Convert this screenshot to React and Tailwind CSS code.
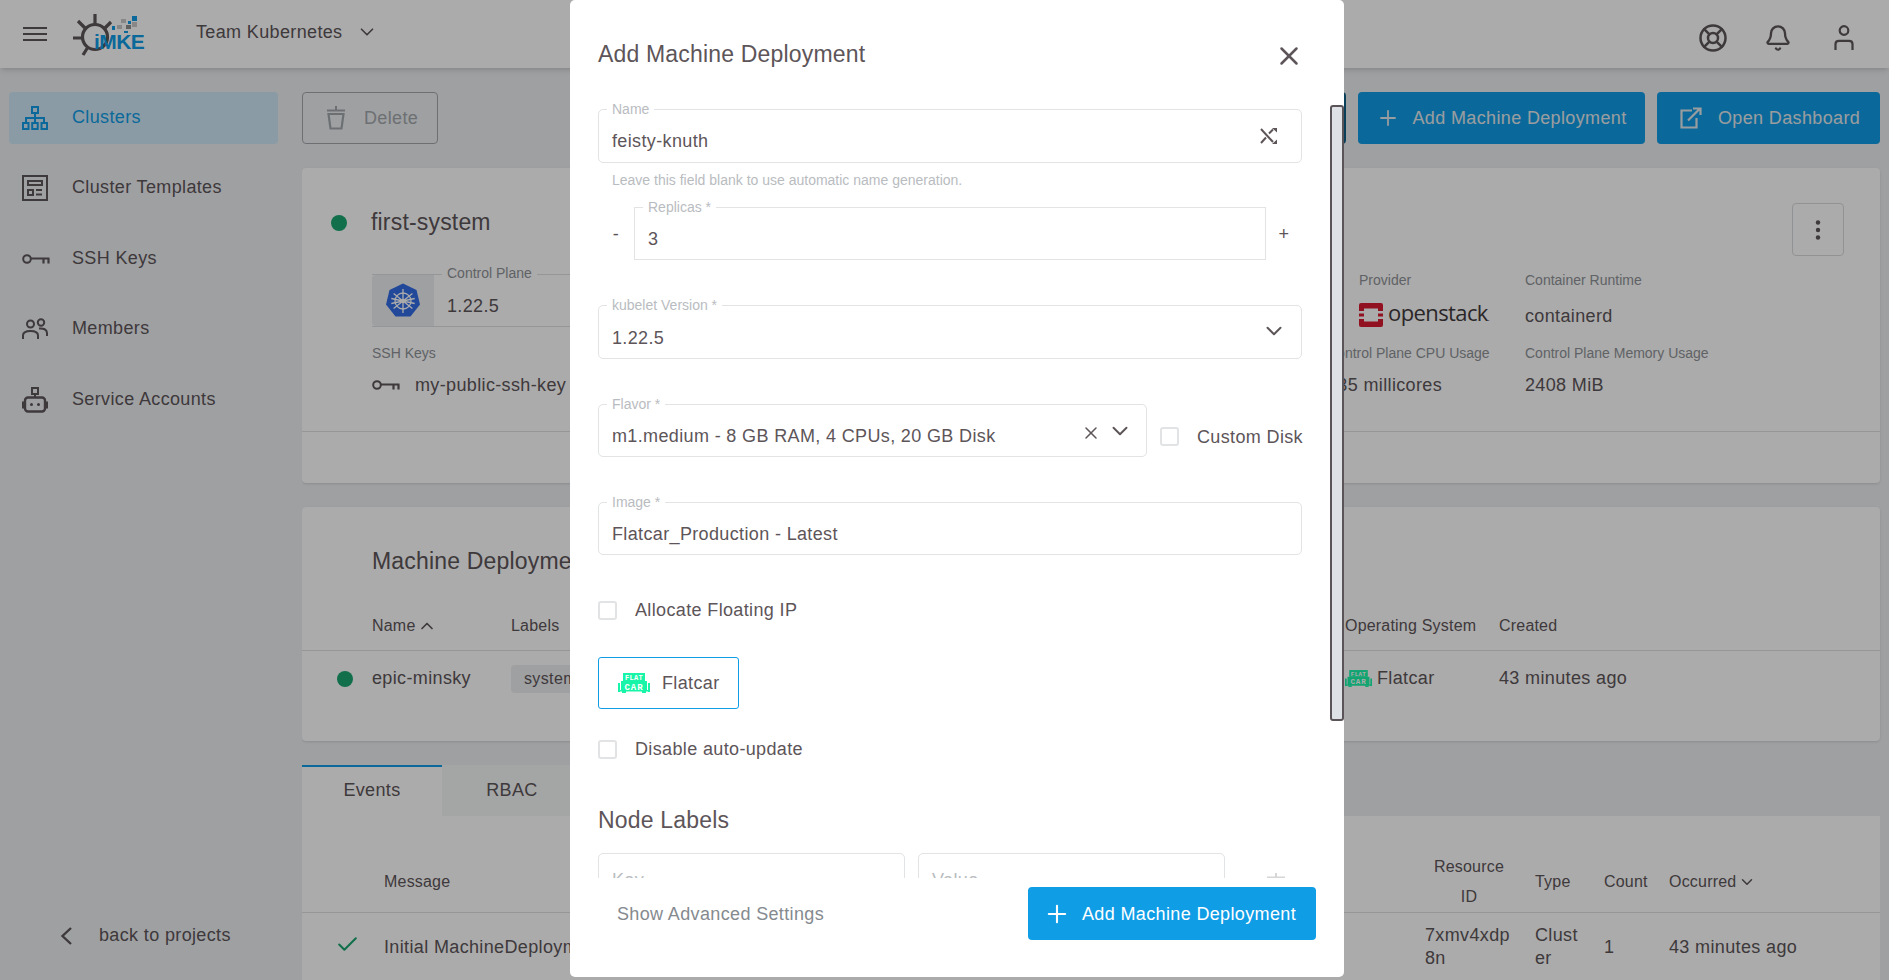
import React from "react";
import { Bell, LifeBuoy, X, ChevronDown, ChevronUp, Plus, Check } from "lucide-react";

const Dot = ({ className = "" }) => (
  <span className={`block w-4 h-4 rounded-full bg-[#1ba672] ${className}`} />
);

const HamburgerIcon = () => (
  <svg width="24" height="16" viewBox="0 0 24 16" fill="none" stroke="currentColor" strokeWidth="2.200">
    <path d="M0 2h24M0 8h24M0 14h24" />
  </svg>
);

const ClustersIcon = () => (
  <svg width="26" height="24" viewBox="0 0 26 24" fill="none" stroke="currentColor" strokeWidth="2">
    <rect x="10" y="1" width="6" height="6" />
    <path d="M13 7v5M4 17v-5h18v5M13 12v5" />
    <rect x="1" y="17" width="5.500" height="6" />
    <rect x="10.200" y="17" width="5.500" height="6" />
    <rect x="19.500" y="17" width="5.500" height="6" />
  </svg>
);

const TemplatesIcon = () => (
  <svg width="26" height="26" viewBox="0 0 26 26" fill="none" stroke="currentColor" strokeWidth="2">
    <rect x="1" y="1" width="24" height="24" />
    <rect x="6" y="6" width="14" height="4" />
    <rect x="6" y="15" width="5" height="5" />
    <path d="M14 15h6M14 19.500h6" />
  </svg>
);

const KeyIcon = ({ className = "" }) => (
  <svg className={className} width="28" height="12" viewBox="0 0 28 12" fill="none" stroke="currentColor" strokeWidth="2">
    <circle cx="5" cy="6" r="3.800" />
    <path d="M9 5.500h18.500M21.500 5.500v5M26.500 5.500v5" strokeWidth="2.200" />
  </svg>
);

const MembersIcon = () => (
  <svg width="26" height="22" viewBox="0 0 26 22" fill="none" stroke="currentColor" strokeWidth="2">
    <circle cx="8.500" cy="6" r="3.500" />
    <circle cx="19" cy="4.500" r="3.200" />
    <path d="M1 21v-3.500c0-3 3-4.500 7.500-4.500s7.500 1.500 7.500 4.500V21" />
    <path d="M17 10.500c4.500-.500 8 1 8 4.500v3" />
  </svg>
);

const RobotIcon = () => (
  <svg width="26" height="26" viewBox="0 0 26 26" fill="none">
    <rect x="10" y="1" width="6" height="6" stroke="currentColor" strokeWidth="2" />
    <path d="M13 7v4" stroke="currentColor" strokeWidth="2" />
    <rect x="3" y="10.500" width="20" height="14" rx="3" stroke="currentColor" strokeWidth="2.400" />
    <path d="M1 14.500v7M25 14.500v7" stroke="currentColor" strokeWidth="2.400" />
    <circle cx="9.500" cy="17.500" r="1.500" fill="currentColor" />
    <circle cx="16.500" cy="17.500" r="1.500" fill="currentColor" />
  </svg>
);

const BucketIcon = ({ className = "" }) => (
  <svg className={className} width="20" height="24" viewBox="0 0 20 24" fill="none" stroke="currentColor" strokeWidth="2">
    <path d="M10 0v4M1 4.500h18" />
    <path d="M2.500 8h15l-2 14.500h-11z" strokeWidth="2.200" />
  </svg>
);

const UserIcon = () => (
  <svg width="20" height="26" viewBox="0 0 20 26" fill="none" stroke="currentColor" strokeWidth="2.200">
    <circle cx="10" cy="5.500" r="4.300" />
    <path d="M1.500 25v-6c0-2 1.500-3.200 3.500-3.200h10c2 0 3.500 1.200 3.500 3.200v6" />
  </svg>
);

const ExternalIcon = () => (
  <svg width="22" height="22" viewBox="0 0 22 22" fill="none" stroke="currentColor" strokeWidth="2.200">
    <path d="M12 3.500H1.500v17h15V11" />
    <path d="M8 13.500 20 1.500M13 1.500h7.500V8" />
  </svg>
);

const MoreIcon = () => (
  <svg width="6" height="20" viewBox="0 0 6 20" fill="currentColor">
    <circle cx="3" cy="2.500" r="2.200" />
    <circle cx="3" cy="10" r="2.200" />
    <circle cx="3" cy="17.500" r="2.200" />
  </svg>
);

const ShuffleIcon = ({ className = "" }) => (
  <svg className={className} width="18" height="16" viewBox="0 0 18 16" fill="none" stroke="currentColor" strokeWidth="2">
    <path d="M1 1l12 13M1 15l5-5.500M9 5.500l4-4" />
    <path d="M12 0h5v4.500zM12 16h5v-4.500z" fill="currentColor" stroke="none" />
  </svg>
);

const BackIcon = ({ className = "" }) => (
  <svg className={className} width="12" height="18" viewBox="0 0 12 18" fill="none" stroke="currentColor" strokeWidth="2.400">
    <path d="M11 1 2.500 9 11 17" />
  </svg>
);

// ship wheel and the grey/blue pixels, the letters stay real text
const Logo = () => (
  <div className="relative w-[76px] h-[46px]">
    <svg className="absolute left-0 top-0" width="76" height="46" viewBox="0 0 76 46" fill="none">
      <g stroke="#5d5559" strokeWidth="3.200">
        <circle cx="24" cy="27" r="12.500" />
        <path d="M24 4v10M2 28h10M7 11l8 8M40 12l-7 7M12 45l5-8" />
      </g>
      <rect x="61" y="6" width="5" height="5" fill="#0f9de6" />
      <rect x="50" y="9" width="5" height="4" fill="#c9c9c9" />
      <rect x="57" y="11" width="3" height="3" fill="#0f9de6" />
      <rect x="46" y="15" width="5" height="4" fill="#c9c9c9" />
      <rect x="61" y="12" width="5" height="5" fill="#c9c9c9" />
      <rect x="55" y="15" width="5" height="4" fill="#8f8f8f" />
      <rect x="41" y="16" width="3" height="4" fill="#0f9de6" />
      <rect x="53" y="21" width="4" height="2" fill="#0f9de6" />
    </svg>
    <span className="absolute left-[23px] top-[19px] font-bold text-[21px] leading-[26px] tracking-[-0.6px] text-[#0f9de6]">
      iMKE
    </span>
  </div>
);

const KubeLogo = () => (
  <svg width="36" height="36" viewBox="0 0 36 36">
    <path d="M18 0.500 31.500 7 35 21.500 25.500 33.500H10.500L1 21.500 4.500 7z" fill="#326ce5" />
    <g fill="none" stroke="#fff" strokeWidth="1.300">
      <circle cx="18" cy="18" r="8" />
      <circle cx="18" cy="18" r="1.500" />
      <path d="M18 6v24M8.600 10.500l18.800 15M27.400 10.500l-18.800 15M6.300 20.500l23.400-5M29.700 20.500l-23.400-5" />
    </g>
  </svg>
);

const OpenstackLogo = () => (
  <div className="flex items-center gap-[5px]">
    <svg width="24" height="24" viewBox="0 0 24 24">
      <path d="M2 0h20a2 2 0 0 1 2 2v6h-5V5.500H5V8H0V2a2 2 0 0 1 2-2zM0 10.500h5v3H0zM19 10.500h5v3h-5zM0 16h5v2.500h14V16h5v6a2 2 0 0 1-2 2H2a2 2 0 0 1-2-2z" fill="#da1a32" />
    </svg>
    <span className="mt-[1px] font-['Open_Sans'] font-medium text-[22px] leading-[24px] tracking-[-0.6px] text-[#3f3a3c]">
      openstack<span className="text-[7px] tracking-normal">.</span>
    </span>
  </div>
);

const FlatcarIcon = ({ className = "" }) => (
  <svg className={className} width="32" height="20" viewBox="0 0 32 20">
    <rect x="5" y="0" width="22" height="8" fill="#18f5a8" />
    <rect x="3" y="8" width="26" height="10" fill="#18f5a8" />
    <rect x="0" y="10" width="2" height="9" fill="#18f5a8" />
    <rect x="30" y="10" width="2" height="9" fill="#18f5a8" />
    <rect x="0" y="17" width="32" height="1.500" fill="#18f5a8" />
    <rect x="4" y="18" width="4" height="2" fill="#18f5a8" />
    <rect x="24" y="18" width="4" height="2" fill="#18f5a8" />
    <text x="16" y="6.500" textAnchor="middle" fontFamily="Liberation Mono" fontWeight="700" fontSize="7" fill="#fff">FLAT</text>
    <text x="16" y="16.500" textAnchor="middle" fontFamily="Liberation Mono" fontWeight="700" fontSize="9" letterSpacing="1" fill="#fff">CAR</text>
  </svg>
);

const navItems = [
  { label: "Clusters", icon: <ClustersIcon />, active: true },
  { label: "Cluster Templates", icon: <TemplatesIcon /> },
  { label: "SSH Keys", icon: <KeyIcon /> },
  { label: "Members", icon: <MembersIcon /> },
  { label: "Service Accounts", icon: <RobotIcon /> },
];

const Sidebar = () => (
  <aside className="w-[302px] shrink-0 pl-[9px] pr-[24px] pt-[24px] flex flex-col">
    <div className="flex flex-col gap-[18.400px]">
      {navItems.map((item) => (
        <div
          key={item.label}
          className={`flex items-center h-[52px] rounded pl-[13px] ${
            item.active ? "bg-[#cee7f6] text-[#0f9de6]" : "text-[#5d5559]"
          }`}
        >
          <span className="w-[50px] flex shrink-0">{item.icon}</span>
          <span className="text-lg leading-[24px] -mt-[2px]">{item.label}</span>
        </div>
      ))}
    </div>
    <div className="mt-auto mb-[33px] flex items-center text-[#5d5559] pl-[51px]">
      <BackIcon className="shrink-0 mt-[2px]" />
      <span className="text-lg leading-[24px] ml-[27px]">back to projects</span>
    </div>
  </aside>
);

const Actions = () => (
  <div className="flex h-[52px] gap-[12px] text-lg">
    <button className="flex items-center w-[136px] h-[52px] border border-[#a3a8ac] rounded text-[#a3a8ac] pl-[23px]">
      <BucketIcon />
      <span className="ml-[18px]">Delete</span>
    </button>
    <button className="ml-auto w-[160px] h-[52px] rounded bg-[#0f5f87]" />
    <button className="flex items-center w-[287px] h-[52px] rounded bg-[#0f9de6] text-[#e6eaee] pl-[18px]">
      <Plus className="w-[24px] h-[24px]" strokeWidth={1.800} />
      <span className="ml-[12.500px]">Add Machine Deployment</span>
    </button>
    <button className="flex items-center w-[223px] h-[52px] rounded bg-[#0f9de6] text-[#e6eaee] pl-[23px]">
      <ExternalIcon />
      <span className="ml-[16px]">Open Dashboard</span>
    </button>
  </div>
);

const MutedLabel = ({ children, className = "" }) => (
  <div className={`text-sm tracking-normal leading-[14px] text-[#8f9398] ${className}`}>{children}</div>
);

const ClusterCard = () => (
  <section className="mt-[24px] bg-white rounded shadow-sm">
    <div className="h-[264px] border-b border-[#dfe0e1] pl-[29px] pr-[36px]">
      <div className="flex pt-[35px]">
        <Dot className="mt-[12px]" />
        <h2 className="ml-[24px] text-[23px] tracking-[0.18px] leading-[32px] mt-[3px]">first-system</h2>
        <button className="ml-auto w-[52px] h-[53px] border border-[#d9dadb] rounded flex items-center justify-center">
          <MoreIcon />
        </button>
      </div>
      <div className="ml-[41px] mt-[16px] grid grid-cols-[955px_198px_1fr] grid-rows-[74px_auto]">
        <div className="relative flex w-[500px] h-[53px] mt-[2px] border-t border-b border-[#dfe0e1]">
          <div className="w-[62px] h-full bg-[#edeff2] rounded-l flex items-center justify-center">
            <KubeLogo />
          </div>
          <div className="pl-[13px] pt-[19px] text-lg leading-[24px]">1.22.5</div>
          <span className="absolute left-[70px] -top-[9px] px-[5px] bg-white text-sm tracking-normal leading-[14px] text-[#8f9398]">
            Control Plane
          </span>
        </div>
        <div className="pl-[32px] pt-[1px]">
          <MutedLabel>Provider</MutedLabel>
          <div className="mt-[12px]"><OpenstackLogo /></div>
        </div>
        <div className="pt-[1px]">
          <MutedLabel>Container Runtime</MutedLabel>
          <div className="mt-[17px] text-lg leading-[24px]">containerd</div>
        </div>
        <div>
          <MutedLabel>SSH Keys</MutedLabel>
          <div className="mt-[13px] flex items-center text-lg leading-[24px]">
            <KeyIcon />
            <span className="ml-[15px]">my-public-ssh-key</span>
          </div>
        </div>
        <div>
          <MutedLabel>Control Plane CPU Usage</MutedLabel>
          <div className="mt-[13px] text-lg leading-[24px]">135 millicores</div>
        </div>
        <div>
          <MutedLabel>Control Plane Memory Usage</MutedLabel>
          <div className="mt-[13px] text-lg leading-[24px]">2408 MiB</div>
        </div>
      </div>
    </div>
    <div className="h-[51px]" />
  </section>
);

const DeploymentsCard = () => (
  <section className="mt-[24px] bg-white rounded shadow-sm h-[234px]">
    <h2 className="pl-[70px] pt-[38px] text-[23px] tracking-[0.18px] leading-[32px]">Machine Deployments</h2>
    <table className="w-full table-fixed mt-[25px]">
      <colgroup>
        <col className="w-[70px]" />
        <col className="w-[139px]" />
        <col className="w-[834px]" />
        <col className="w-[154px]" />
        <col />
      </colgroup>
      <thead>
        <tr className="border-b border-[#dfe0e1] text-left text-base tracking-[0.2px] h-[48px]">
          <th />
          <th className="font-normal">
            <span className="inline-flex items-center">
              Name <ChevronUp className="w-[20px] h-[20px] ml-[2px]" strokeWidth={2} />
            </span>
          </th>
          <th className="font-normal">Labels</th>
          <th className="font-normal">Operating System</th>
          <th className="font-normal">Created</th>
        </tr>
      </thead>
      <tbody>
        <tr className="text-lg h-[56px]">
          <td><Dot className="ml-[35px] mt-[2px]" /></td>
          <td>epic-minsky</td>
          <td>
            <span className="inline-block bg-[#edeff2] rounded h-[28px] leading-[28px] px-[13px] text-base">system-components</span>
          </td>
          <td>
            <span className="flex items-center">
              <FlatcarIcon className="w-[27px] h-[17px] shrink-0" />
              <span className="ml-[5px]">Flatcar</span>
            </span>
          </td>
          <td>43 minutes ago</td>
        </tr>
      </tbody>
    </table>
  </section>
);

const EventsCard = () => (
  <section className="mt-[24px]">
    <div className="flex h-[51px] text-lg">
      <div className="w-[140px] bg-white border-t-2 border-[#0f9de6] flex items-center justify-center pb-[3px]">Events</div>
      <div className="w-[140px] bg-[#f5f6f7] flex items-center justify-center pb-[1px]">RBAC</div>
    </div>
    <div className="bg-white rounded-b pt-[36px] h-[260px]">
      <table className="w-full table-fixed">
        <colgroup>
          <col className="w-[82px]" />
          <col className="w-[1041px]" />
          <col className="w-[110px]" />
          <col className="w-[69px]" />
          <col className="w-[65px]" />
          <col />
        </colgroup>
        <thead>
          <tr className="border-b border-[#dfe0e1] text-left text-base tracking-[0.2px] leading-[30px]">
            <th />
            <th className="font-normal">Message</th>
            <th className="font-normal"><div className="w-[88px] text-center">Resource ID</div></th>
            <th className="font-normal">Type</th>
            <th className="font-normal">Count</th>
            <th className="font-normal">
              <span className="inline-flex items-center">
                Occurred <ChevronDown className="w-[18px] h-[18px] ml-[2px]" strokeWidth={2} />
              </span>
            </th>
          </tr>
        </thead>
        <tbody>
          <tr className="text-lg leading-[23px]">
            <td className="pt-[11px]"><Check className="ml-[33px] -mt-[5px] w-[25px] h-[25px] text-[#1ba672]" strokeWidth={2} /></td>
            <td className="pt-[11px]">Initial MachineDeployment "epic-minsky" replicas</td>
            <td className="pt-[11px]"><div className="w-[88px] break-all">7xmv4xdp8n</div></td>
            <td className="pt-[11px]"><div className="w-[46px] break-all">Cluster</div></td>
            <td className="pt-[11px]">1</td>
            <td className="pt-[11px]">43 minutes ago</td>
          </tr>
        </tbody>
      </table>
    </div>
  </section>
);

const Field = ({ label, value, className = "", valueClass = "top-[19px]", square = false, children }) => (
  <div
    className={`relative flex items-start border border-[#e1e3e5] ${square ? "" : "rounded-[5px]"} ${className}`}
  >
    {label && (
      <span className="absolute left-[8px] -top-[8px] px-[5px] bg-white text-sm tracking-normal leading-[14px] text-[#b9bcbf]">
        {label}
      </span>
    )}
    <span className={`absolute left-[13px] text-lg leading-[24px] text-[#5d5559] ${valueClass}`}>{value}</span>
    {children}
  </div>
);

const CheckRow = ({ label, className = "" }) => (
  <label className={`flex items-center whitespace-nowrap ${className}`}>
    <span className="block w-[19px] h-[19px] border-2 border-[#e1e3e5] rounded-[3px]" />
    <span className="ml-[18px] text-lg leading-[24px]">{label}</span>
  </label>
);

const Dialog = () => (
  <div className="absolute left-[570px] top-0 w-[774px] h-[977px] bg-white rounded-[5px] flex flex-col text-[#5d5559]">
    <div className="h-[88px] shrink-0 flex px-[28px] pt-[38px]">
      <h2 className="text-[23px] tracking-[0.18px] leading-[32px]">Add Machine Deployment</h2>
      <X className="ml-auto mr-[12px] mt-[3px] w-[30px] h-[30px]" strokeWidth={2} />
    </div>
    <div className="h-[790px] shrink-0 overflow-hidden pl-[28px] pr-[42px]">
      <Field label="Name" value="feisty-knuth" className="mt-[21px] h-[54px]">
        <ShuffleIcon className="absolute right-[23px] top-[18px]" />
      </Field>
      <p className="mt-[10px] pl-[14px] text-sm tracking-normal leading-[14px] text-[#b9bcbf]">
        Leave this field blank to use automatic name generation.
      </p>
      <div className="mt-[20px] flex items-center h-[53px]">
        <span className="w-[36px] text-center text-lg mt-[1px]">-</span>
        <Field label="Replicas *" value="3" square className="flex-1 h-[53px]" />
        <span className="w-[36px] text-center text-lg mt-[1px]">+</span>
      </div>
      <Field label="kubelet Version *" value="1.22.5" valueClass="top-[20px]" className="mt-[45px] h-[54px]">
        <ChevronDown className="absolute right-[14px] top-[12px] w-[26px] h-[26px]" strokeWidth={1.800} />
      </Field>
      <div className="mt-[45px] flex items-center h-[53px]">
        <Field label="Flavor *" value="m1.medium - 8 GB RAM, 4 CPUs, 20 GB Disk" className="w-[549px] shrink-0 h-[53px]">
          <X className="absolute right-[45px] top-[18px] w-[20px] h-[20px]" strokeWidth={1.800} />
          <ChevronDown className="absolute right-[13px] top-[13px] w-[26px] h-[26px]" strokeWidth={1.800} />
        </Field>
        <CheckRow label="Custom Disk" className="ml-[13px] mt-[12px]" />
      </div>
      <Field label="Image *" value="Flatcar_Production - Latest" className="mt-[45px] h-[53px]" />
      <CheckRow label="Allocate Floating IP" className="mt-[43px]" />
      <button className="mt-[35px] flex items-center w-[141px] h-[52px] border border-[#0f9de6] rounded-[3px] pl-[19px] text-lg">
        <FlatcarIcon />
        <span className="ml-[12px]">Flatcar</span>
      </button>
      <CheckRow label="Disable auto-update" className="mt-[28px]" />
      <h3 className="mt-[43px] text-[23px] tracking-[0.18px] leading-[32px]">Node Labels</h3>
      <div className="mt-[17px] flex">
        <Field value={<span className="text-[#b9bcbf]">Key</span>} valueClass="top-[14px]" className="w-[307px] h-[54px]" />
        <Field value={<span className="text-[#b9bcbf]">Value</span>} valueClass="top-[14px]" className="ml-[13px] w-[307px] h-[54px]" />
        <BucketIcon className="ml-[41px] mt-[20px] text-[#d6d6d6]" />
      </div>
    </div>
    <div className="flex items-start pl-[47px] pr-[28px] pt-[9px]">
      <span className="text-lg leading-[55px] text-[#858a8f]">Show Advanced Settings</span>
      <button className="ml-auto flex items-center w-[288px] h-[53px] rounded bg-[#0f9de6] text-white text-lg pl-[15px]">
        <Plus className="w-[28px] h-[28px]" strokeWidth={1.800} />
        <span className="ml-[11px]">Add Machine Deployment</span>
      </button>
    </div>
    <div className="absolute left-[760px] top-[105px] w-[14px] h-[616px] bg-[#dee2e6] border-2 border-[#5a5458] rounded-[3px]" />
  </div>
);

export default function App() {
  return (
    <div className="relative w-screen h-screen overflow-hidden bg-[#edeff2] text-[#5d5559] tracking-[0.36px] font-['Liberation_Sans',sans-serif]">
      <header className="relative z-10 h-[68px] bg-white shadow-md flex items-center text-[#5d5559]">
        <button className="ml-[23px]"><HamburgerIcon /></button>
        <div className="ml-[24px] -mt-[2px]"><Logo /></div>
        <div className="ml-[49px] flex items-center -mt-[4px] text-lg leading-[24px]">
          Team Kubernetes
          <ChevronDown className="ml-[14px] w-[22px] h-[22px]" strokeWidth={1.800} />
        </div>
        <div className="ml-auto flex items-center pr-[35px] mt-[7px]">
          <LifeBuoy className="w-[30px] h-[30px]" strokeWidth={2} />
          <Bell className="ml-[36px] w-[28px] h-[28px]" strokeWidth={2} />
          <span className="ml-[42px]"><UserIcon /></span>
        </div>
      </header>
      <div className="flex h-[calc(100vh-68px)]">
        <Sidebar />
        <main className="flex-1 pt-[24px] pr-[9px] min-w-0 overflow-hidden">
          <Actions />
          <ClusterCard />
          <DeploymentsCard />
          <EventsCard />
        </main>
      </div>
      <div className="absolute inset-0 z-20 bg-black/33" />
      <div className="absolute inset-0 z-30">
        <Dialog />
      </div>
    </div>
  );
}
